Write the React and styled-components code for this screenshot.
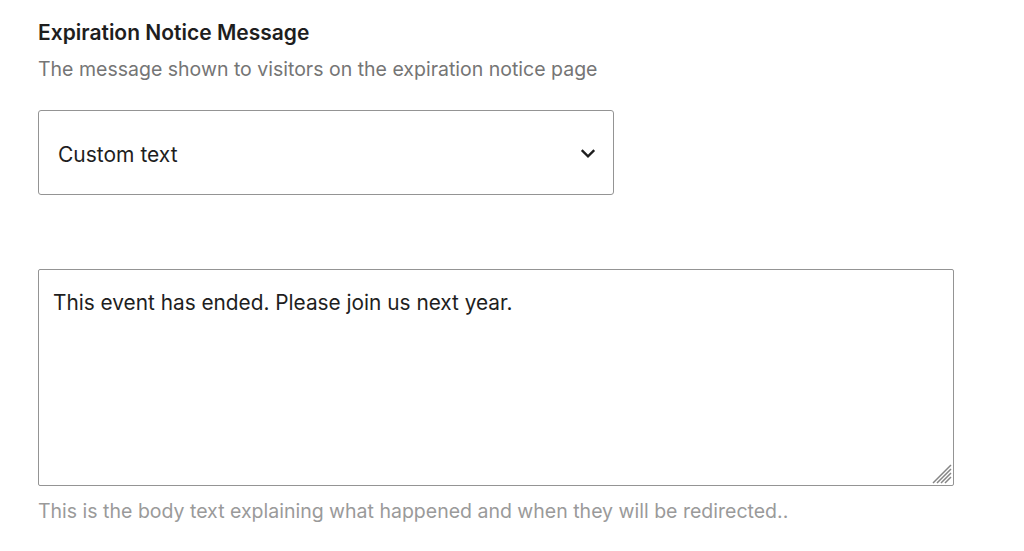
import React from "react";
import styled, { createGlobalStyle } from "styled-components";

const Global = createGlobalStyle`
  body {
    margin: 0;
    background: #fff;
    font-family: Inter, "Noto Sans", sans-serif;
    color: #1e1e1e;
  }
`;

const Page = styled.div`
  padding: 20px 0 0 38px;
  width: 916px;
`;

const Heading = styled.h2`
  margin: 0;
  font-size: 21px;
  font-weight: 600;
  line-height: 26px;
  color: #1e1e1e;
`;

const Description = styled.p`
  margin: ${(p) => (p.$muted ? "12px" : "10px")} 0 0;
  font-size: 19.5px;
  line-height: 26px;
  color: ${(p) => (p.$muted ? "#9a9a9a" : "#757575")};
`;

const SelectWrap = styled.div`
  position: relative;
  margin-top: 28px;
  width: 576px;
`;

const Select = styled.select`
  appearance: none;
  display: block;
  width: 100%;
  height: 85px;
  box-sizing: border-box;
  border: 1px solid #949494;
  border-radius: 3px;
  background: #fff;
  padding: 3px 48px 0 19px;
  font-family: inherit;
  font-size: 21px;
  color: #1e1e1e;
`;

const Chevron = styled.svg`
  position: absolute;
  right: 16px;
  top: 50%;
  transform: translateY(-50%);
  pointer-events: none;
`;

const AreaWrap = styled.div`
  position: relative;
  margin-top: 74px;
  width: 916px;
`;

const TextArea = styled.textarea`
  display: block;
  width: 100%;
  height: 217px;
  box-sizing: border-box;
  border: 1px solid #949494;
  border-radius: 2px;
  padding: 19px 14px;
  font-family: inherit;
  font-size: 20.8px;
  line-height: 28px;
  color: #1e1e1e;
  resize: none;
`;

const Grip = styled.svg`
  position: absolute;
  right: 2px;
  bottom: 2px;
  pointer-events: none;
`;

export default function App() {
  return (
    <>
      <Global />
      <Page>
        <Heading>Expiration Notice Message</Heading>
        <Description>The message shown to visitors on the expiration notice page</Description>
        <SelectWrap>
          <Select defaultValue="custom">
            <option value="custom">Custom text</option>
            <option value="default">Default text</option>
          </Select>
          <Chevron width="20" height="20" viewBox="0 0 24 24" fill="none" stroke="#1e1e1e" strokeWidth="2.8">
            <path d="M4.5 8.5l7.5 7.5 7.5-7.5" />
          </Chevron>
        </SelectWrap>
        <AreaWrap>
          <TextArea defaultValue="This event has ended. Please join us next year." />
          <Grip width="21" height="21" viewBox="0 0 21 21" stroke="#858585" strokeWidth="1.5">
            <path d="M20 2L2 20M20 6L6 20M20 10L10 20M20 14L14 20" />
          </Grip>
        </AreaWrap>
        <Description $muted>This is the body text explaining what happened and when they will be redirected..</Description>
      </Page>
    </>
  );
}
